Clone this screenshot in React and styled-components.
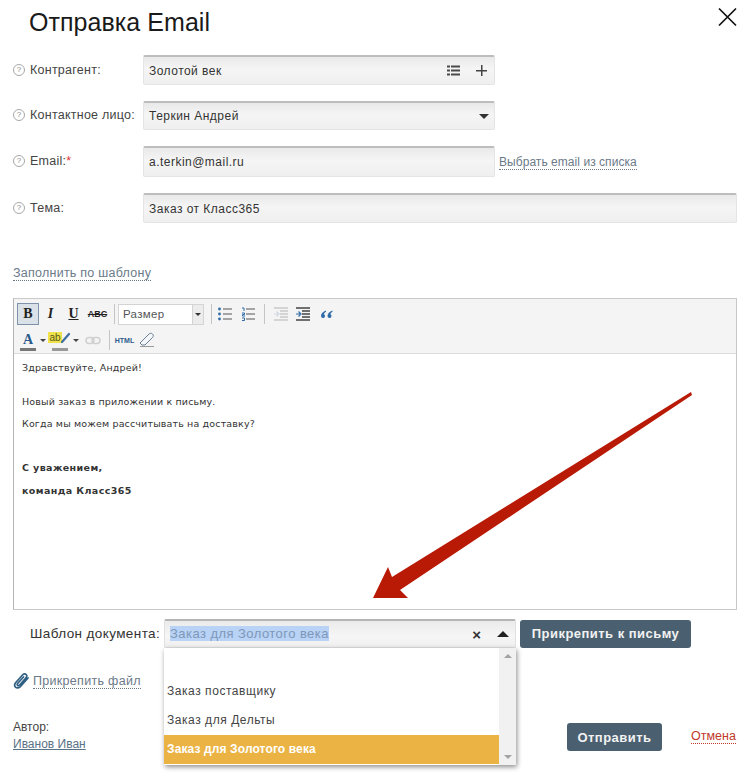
import React from 'react';
import styled, { createGlobalStyle } from 'styled-components';

const GlobalStyle = createGlobalStyle`
    html, body {
        margin: 0;
        padding: 0;
        background: #fff;
    }

    body {
        font-family: "Liberation Sans", Arial, sans-serif;
        color: #333;
    }
`;

const contactRows = [
    { label: 'Контрагент:', value: 'Золотой век', kind: 'contractor' },
    { label: 'Контактное лицо:', value: 'Теркин Андрей', kind: 'select' },
    { label: 'Email:', value: 'a.terkin@mail.ru', kind: 'email', required: true },
    { label: 'Тема:', value: 'Заказ от Класс365', kind: 'wide' },
];

const letterLines = [
    { text: 'Здравствуйте, Андрей!', gap: 0 },
    { text: 'Новый заказ в приложении к письму.', gap: 12 },
    { text: 'Когда мы можем рассчитывать на доставку?', gap: 0 },
    { text: 'С уважением,', gap: 22, bold: true },
    { text: 'команда Класс365', gap: 1, bold: true },
];

const ListIcon = () => (
    <svg width="13" height="11" viewBox="0 0 13 11">
        <g fill="#4a4a4a">
            <rect x="0" y="0.500" width="3" height="2" />
            <rect x="0" y="4.500" width="3" height="2" />
            <rect x="0" y="8.500" width="3" height="2" />
            <rect x="4" y="0.500" width="9" height="2" />
            <rect x="4" y="4.500" width="9" height="2" />
            <rect x="4" y="8.500" width="9" height="2" />
        </g>
    </svg>
);

const BulletsIcon = () => (
    <svg width="14" height="14" viewBox="0 0 14 14">
        <g fill="#2f6ca8">
            <circle cx="1.500" cy="2" r="1.400" />
            <circle cx="1.500" cy="7" r="1.400" />
            <circle cx="1.500" cy="12" r="1.400" />
        </g>
        <path d="M5 2h9M5 7h9M5 12h9" stroke="#555" strokeWidth="1" />
    </svg>
);

const NumbersIcon = () => (
    <svg width="14" height="14" viewBox="0 0 14 14">
        <path d="M1 1h2v3M1 6h2.500v1.500h-2v1.500h2.500M1 11h2.500v2.500h-2.500" fill="none" stroke="#2f6ca8" strokeWidth="1" />
        <path d="M5 2h9M5 7h9M5 12h9" stroke="#555" strokeWidth="1" />
    </svg>
);

const IndentIcon = ({ faded }) => (
    <svg width="16" height="14" viewBox="0 0 16 14">
        <path
            d="M1 1h14M7 4h8M7 7h8M7 10h8M1 13h14"
            stroke={faded ? '#c9c9c9' : '#444'}
            strokeWidth="1.300"
        />
        <path d="M1 7h4M3.500 4.500l2.500 2.500l-2.500 2.500" fill="none" stroke={faded ? '#cfd8e2' : '#2f6ca8'} strokeWidth="1.200" />
    </svg>
);

const QuoteIcon = () => (
    <svg width="13" height="9" viewBox="0 0 13 9">
        <path d="M6 0.500C3 1.500 1 3.500 1 6a2 2 0 1 0 3-1.700c0-1.200 1-2 2-2.600zM12.500 0.500C9.500 1.500 7.500 3.500 7.500 6a2 2 0 1 0 3-1.700c0-1.200 1-2 2-2.600z" fill="#2f6ca8" />
    </svg>
);

const PenStroke = () => (
    <svg width="10" height="12" viewBox="0 0 10 12">
        <path d="M1 10L8 2" stroke="#3f6f9f" strokeWidth="2.200" strokeLinecap="round" />
    </svg>
);

const LinkIcon = () => (
    <svg width="16" height="9" viewBox="0 0 16 9">
        <rect x="1" y="1.500" width="8" height="6" rx="3" fill="none" stroke="#d0d0d0" strokeWidth="1.500" />
        <rect x="7" y="1.500" width="8" height="6" rx="3" fill="none" stroke="#d0d0d0" strokeWidth="1.500" />
    </svg>
);

const EraserIcon = () => (
    <svg width="16" height="16" viewBox="0 0 16 16">
        <path d="M1 11L10 2c1-1 2.500-1 3.500 0s1 2.500 0 3.500L6 13H3z" fill="#f4f7fa" stroke="#6d7f92" strokeWidth="1" />
        <path d="M1 14.500h14" stroke="#9a9a9a" strokeWidth="1" />
    </svg>
);

const ClipIcon = () => (
    <svg width="17" height="18" viewBox="0 0 17 18">
        <path
            d="M15 6L7.500 14.500c-1.500 1.700-3.800 1.900-5 .7s-1-3.200.5-4.900L9.500 3c1.100-1.200 2.700-1.400 3.600-.5s.8 2.400-.3 3.600L6.600 13c-.6.700-1.500.8-2 .3s-.4-1.300.2-2L10.500 5"
            fill="none"
            stroke="#2f5f82"
            strokeWidth="1.700"
            strokeLinecap="round"
        />
    </svg>
);

function App() {
    return (
        <Page>
            <GlobalStyle />
            <Header>
                <Title>Отправка Email</Title>
                <svg width="20" height="20" viewBox="0 0 20 20">
                    <path d="M2 1.500L19 18.500M19 1.500L2 18.500" stroke="#111" strokeWidth="1.700" />
                </svg>
            </Header>

            <Form>
                {contactRows.map((row) => (
                    <FormRow key={row.label}>
                        <FieldLabel>
                            <Help>?</Help>
                            {row.label}
                            {row.required && <Required>*</Required>}
                        </FieldLabel>
                        <Field $wide={row.kind === 'wide'}>
                            <FieldValue>{row.value}</FieldValue>
                            {row.kind === 'contractor' && (
                                <FieldIcons>
                                    <ListIcon />
                                    <PlusMark />
                                </FieldIcons>
                            )}
                            {row.kind === 'select' && <CaretDown />}
                        </Field>
                        {row.kind === 'email' && <PickLink>Выбрать email из списка</PickLink>}
                    </FormRow>
                ))}
            </Form>

            <TemplateLink>Заполнить по шаблону</TemplateLink>

            <Editor>
                <Toolbar>
                    <ToolRow>
                        <ToolButton $w={22} $active $font="serif">B</ToolButton>
                        <ToolButton $w={23} $font="serif" $italic>I</ToolButton>
                        <ToolButton $w={23} $font="serif" $underline>U</ToolButton>
                        <ToolButton $w={25} $small $strike>ABC</ToolButton>
                        <ToolSep />
                        <SizeSelect>
                            <SizeText>Размер</SizeText>
                            <SizeArrow />
                        </SizeSelect>
                        <ToolSep $gap={7} />
                        <ToolButton $w={14} $ml={3}><BulletsIcon /></ToolButton>
                        <ToolButton $w={14} $ml={9}><NumbersIcon /></ToolButton>
                        <ToolSep $gap={9} />
                        <ToolButton $w={16} $ml={5}><IndentIcon faded /></ToolButton>
                        <ToolButton $w={16} $ml={6}><IndentIcon /></ToolButton>
                        <ToolButton $w={13} $ml={9}><QuoteIcon /></ToolButton>
                    </ToolRow>
                    <ToolRow>
                        <ToolButton $w={22} $font="serif" $color="#2a5a8c" $swatch="#777">A</ToolButton>
                        <SmallCaret />
                        <MarkerTool>
                            <MarkerText>ab</MarkerText>
                            <PenStroke />
                        </MarkerTool>
                        <SmallCaret />
                        <ToolButton $w={26}><LinkIcon /></ToolButton>
                        <ToolSep $gap={3} />
                        <ToolButton $w={23} $tiny $color="#2a5a8c">HTML</ToolButton>
                        <ToolButton $w={22}><EraserIcon /></ToolButton>
                    </ToolRow>
                </Toolbar>
                <EditorBody>
                    {letterLines.map((line) => (
                        <LetterLine key={line.text} $gap={line.gap} $bold={line.bold}>
                            {line.text}
                        </LetterLine>
                    ))}
                </EditorBody>
            </Editor>

            <TemplateRow>
                <TemplateLabel>Шаблон документа:</TemplateLabel>
                <TemplateSelect>
                    <Selected>Заказ для Золотого века</Selected>
                    <ClearMark>×</ClearMark>
                    <CaretUp />
                    <Dropdown>
                        <Options>
                            <Option />
                            <Option>Заказ поставщику</Option>
                            <Option>Заказ для Дельты</Option>
                            <Option $active>Заказ для Золотого века</Option>
                        </Options>
                        <Scrollbar>
                            <ScrollUp />
                            <ScrollDown />
                        </Scrollbar>
                    </Dropdown>
                </TemplateSelect>
                <DarkButton $w={171}>Прикрепить к письму</DarkButton>
            </TemplateRow>

            <AttachRow>
                <ClipIcon />
                <AttachLink>Прикрепить файл</AttachLink>
            </AttachRow>

            <Footer>
                <Author>
                    <div>Автор:</div>
                    <AuthorName>Иванов Иван</AuthorName>
                </Author>
                <DarkButton $w={95}>Отправить</DarkButton>
                <CancelLink>Отмена</CancelLink>
            </Footer>

            <Arrow width="756" height="773" viewBox="0 0 756 773">
                <polygon points="691,392 392,577 388,567 373,598 408,598 400,590 692,395" fill="#b81a06" />
            </Arrow>
        </Page>
    );
}

const Page = styled.div`
    position: relative;
    width: 756px;
    height: 773px;
    box-sizing: border-box;
    padding: 0 19px 0 13px;
    overflow: hidden;
`;

const Arrow = styled.svg`
    position: absolute;
    left: 0;
    top: 0;
    pointer-events: none;
`;

const Header = styled.header`
    display: flex;
    justify-content: space-between;
    align-items: flex-start;
    height: 55px;

    svg {
        margin-top: 7px;
    }
`;

const Title = styled.h1`
    margin: 0 0 0 16px;
    font-size: 25px;
    line-height: 44px;
    font-weight: 400;
    letter-spacing: 0.05px;
    color: #1a1a1a;
`;

const Form = styled.div`
    display: grid;
    grid-template-rows: 30px 29px 31px 30px;
    row-gap: 16px;
`;

const FormRow = styled.div`
    display: flex;
    align-items: center;
`;

const FieldLabel = styled.label`
    display: flex;
    align-items: center;
    width: 130px;
    font-size: 12.5px;
    letter-spacing: 0.25px;
    color: #444;
    margin-top: -1px;
    white-space: nowrap;
`;

const Help = styled.span`
    width: 10px;
    height: 10px;
    margin-right: 5px;
    border: 1px solid #a8a8a8;
    border-radius: 50%;
    font-size: 8px;
    line-height: 10px;
    letter-spacing: 0;
    text-align: center;
    color: #888;
`;

const Required = styled.span`
    color: #d33;
`;

const Field = styled.div`
    display: flex;
    align-items: center;
    box-sizing: border-box;
    width: ${(p) => (p.$wide ? '594px' : '352px')};
    height: 100%;
    padding: 0 10px 0 5px;
    border: 1px solid #e4e4e4;
    border-top: 2px solid #bdbdbd;
    border-radius: 2px;
    background: linear-gradient(#e9e9e9, #f5f5f5 45%, #efefef);
`;

const FieldValue = styled.span`
    flex: 1;
    font-size: 12px;
    letter-spacing: 0.48px;
    color: #333;
`;

const FieldIcons = styled.span`
    display: flex;
    align-items: center;
    gap: 16px;
    margin-right: -3px;
`;

const PlusMark = styled.span`
    width: 11px;
    height: 11px;
    background:
        linear-gradient(#444, #444) center / 11px 1.5px no-repeat,
        linear-gradient(#444, #444) center / 1.5px 11px no-repeat;
`;

const CaretDown = styled.span`
    border-left: 5px solid transparent;
    border-right: 5px solid transparent;
    border-top: 5px solid #333;
    margin-right: -5px;
`;

const CaretUp = styled.span`
    margin-left: 16px;
    border-left: 6px solid transparent;
    border-right: 6px solid transparent;
    border-bottom: 6px solid #222;
`;

const dottedLink = (color) => `
    color: ${color};
    border-bottom: 1px dotted ${color};
    line-height: 14px;
`;

const PickLink = styled.a`
    margin: 2px 0 0 4px;
    font-size: 12px;
    letter-spacing: 0.05px;
    ${dottedLink('#6b7a88')}
`;

const TemplateLink = styled.a`
    display: inline-block;
    margin-top: 41px;
    font-size: 12.5px;
    letter-spacing: 0.25px;
    ${dottedLink('#6b7a88')}
    padding-top: 2px;
`;

const Editor = styled.section`
    display: flex;
    flex-direction: column;
    box-sizing: border-box;
    height: 312px;
    margin-top: 17px;
    border: 1px solid #c9c9c9;
    border-left-color: #b5b5b5;
`;

const Toolbar = styled.div`
    height: 55px;
    padding: 4px 0 0 3px;
    box-sizing: border-box;
    background: #f4f4f4;
    border-bottom: 1px solid #dcdcdc;
`;

const ToolRow = styled.div`
    display: flex;
    align-items: center;
    height: 22px;
    margin-bottom: 4px;
`;

const ToolButton = styled.span`
    position: relative;
    display: flex;
    align-items: center;
    justify-content: center;
    box-sizing: border-box;
    flex: none;
    width: ${(p) => p.$w}px;
    height: 22px;
    margin-left: ${(p) => p.$ml || 0}px;
    font-family: ${(p) => (p.$font === 'serif' ? '"Liberation Serif", serif' : '"Liberation Sans", sans-serif')};
    font-size: ${(p) => (p.$tiny ? 7 : p.$small ? 9 : 14)}px;
    font-weight: 700;
    font-style: ${(p) => (p.$italic ? 'italic' : 'normal')};
    text-decoration: ${(p) => (p.$underline ? 'underline' : p.$strike ? 'line-through' : 'none')};
    color: ${(p) => p.$color || '#222'};
    background: ${(p) => (p.$active ? '#dbe1e8' : 'none')};
    border: ${(p) => (p.$active ? '1px solid #7e93ab' : 'none')};

    ${(p) => p.$swatch && `
        &::after {
            content: '';
            position: absolute;
            left: 50%;
            bottom: 0;
            width: 16px;
            height: 3px;
            margin-left: -8px;
            background: ${p.$swatch};
        }
    `}
`;

const MarkerTool = styled.span`
    position: relative;
    display: flex;
    align-items: flex-start;
    justify-content: center;
    flex: none;
    width: 25px;
    height: 22px;
    padding-top: 3px;
    box-sizing: border-box;

    svg {
        margin-left: -1px;
    }

    &::after {
        content: '';
        position: absolute;
        left: 50%;
        bottom: 0;
        width: 16px;
        height: 3px;
        margin-left: -8px;
        background: #999;
    }
`;

const MarkerText = styled.span`
    height: 11px;
    padding: 0 1px;
    background: #f0e24a;
    font-size: 10px;
    line-height: 11px;
    color: #55591f;
`;

const ToolSep = styled.span`
    flex: none;
    width: 1px;
    height: 20px;
    margin: 0 3px 0 ${(p) => (p.$gap === undefined ? 4 : p.$gap)}px;
    background: #c4c4c4;
`;

const SizeSelect = styled.span`
    display: flex;
    flex: none;
    box-sizing: border-box;
    width: 86px;
    height: 21px;
    border: 1px solid #d4d4d4;
    background: #fff;
`;

const SizeText = styled.span`
    flex: 1;
    padding-left: 4px;
    font-size: 11.5px;
    line-height: 19px;
    letter-spacing: 0.3px;
    color: #555;
`;

const SizeArrow = styled.span`
    position: relative;
    width: 10px;
    background: #ececec;
    border-left: 1px solid #d4d4d4;

    &::after {
        content: '';
        position: absolute;
        left: 2px;
        top: 8px;
        border-left: 3px solid transparent;
        border-right: 3px solid transparent;
        border-top: 3px solid #333;
    }
`;

const SmallCaret = styled.span`
    flex: none;
    width: 0;
    height: 0;
    margin: 0 1px 0 1px;
    border-left: 3px solid transparent;
    border-right: 3px solid transparent;
    border-top: 3px solid #444;
`;

const EditorBody = styled.div`
    flex: 1;
    padding: 3px 8px;
    background: #fff;
    font-family: "DejaVu Sans", Verdana, sans-serif;
    font-size: 9.5px;
    line-height: 22px;
    color: #333;
`;

const LetterLine = styled.div`
    margin-top: ${(p) => p.$gap}px;
    font-weight: ${(p) => (p.$bold ? 700 : 400)};
    letter-spacing: ${(p) => (p.$bold ? '0.4px' : '0.15px')};
`;

const TemplateRow = styled.div`
    display: flex;
    align-items: center;
    height: 29px;
    margin-top: 9px;
    padding-left: 17px;
`;

const TemplateLabel = styled.span`
    width: 134px;
    font-size: 13.5px;
    letter-spacing: 0.4px;
    color: #333;
`;

const TemplateSelect = styled.div`
    position: relative;
    display: flex;
    align-items: center;
    box-sizing: border-box;
    width: 352px;
    height: 29px;
    margin-right: 4px;
    padding: 0 6px 0 5px;
    border: 1px solid #e0e0e0;
    border-top: 2px solid #b5b5b5;
    border-radius: 2px;
    background: linear-gradient(#ebebeb, #f6f6f6 60%, #efefef);
`;

const Selected = styled.span`
    flex: 1;
    font-size: 13px;
    letter-spacing: 0.45px;
    line-height: 16px;

    &::first-line {
        color: #7f97b8;
        background: #b8d3f6;
    }
`;

const ClearMark = styled.span`
    font-size: 15px;
    font-weight: 700;
    color: #333;
`;

const Dropdown = styled.div`
    position: absolute;
    left: -1px;
    top: 27px;
    z-index: 2;
    display: flex;
    width: 352px;
    height: 117px;
    background: #fff;
    box-shadow: 1px 2px 5px rgba(0, 0, 0, 0.45);
`;

const Options = styled.ul`
    flex: 1;
    margin: 0;
    padding: 0;
    list-style: none;
`;

const Option = styled.li`
    box-sizing: border-box;
    height: 29px;
    padding-left: 3px;
    font-size: 12px;
    line-height: 29px;
    letter-spacing: ${(p) => (p.$active ? '0.12px' : '0.55px')};
    color: ${(p) => (p.$active ? '#fff' : '#444')};
    font-weight: ${(p) => (p.$active ? 700 : 400)};
    background: ${(p) => (p.$active ? '#ebb343' : 'none')};
`;

const Scrollbar = styled.div`
    display: flex;
    flex-direction: column;
    justify-content: space-between;
    align-items: center;
    width: 17px;
    padding: 6px 0;
    box-sizing: border-box;
    background: #f1f1f1;
`;

const ScrollUp = styled.span`
    border-left: 4px solid transparent;
    border-right: 4px solid transparent;
    border-bottom: 4px solid #a3a3a3;
`;

const ScrollDown = styled.span`
    border-left: 4px solid transparent;
    border-right: 4px solid transparent;
    border-top: 4px solid #a3a3a3;
`;

const DarkButton = styled.button`
    flex: none;
    width: ${(p) => p.$w}px;
    height: 28px;
    padding: 0;
    border: none;
    border-radius: 3px;
    background: #4a6070;
    color: #f2f2f2;
    font-family: "Liberation Sans", sans-serif;
    font-size: 13px;
    font-weight: 700;
    letter-spacing: 0.47px;
`;

const AttachRow = styled.div`
    display: flex;
    align-items: center;
    height: 18px;
    margin-top: 24px;
    gap: 3px;
`;

const AttachLink = styled.a`
    font-size: 12.5px;
    letter-spacing: 0.3px;
    ${dottedLink('#6b7a88')}
`;

const Footer = styled.footer`
    display: flex;
    align-items: center;
    height: 32px;
    margin-top: 30px;

    button {
        margin-top: 2px;
    }
`;

const Author = styled.div`
    flex: none;
    width: 554px;
    font-size: 12px;
    line-height: 17px;
    color: #444;
`;

const AuthorName = styled.a`
    color: #5a7286;
    text-decoration: underline;
`;

const CancelLink = styled.a`
    margin: 1px 0 0 29px;
    font-size: 12.5px;
    ${dottedLink('#c0392b')}
`;

export default App;
